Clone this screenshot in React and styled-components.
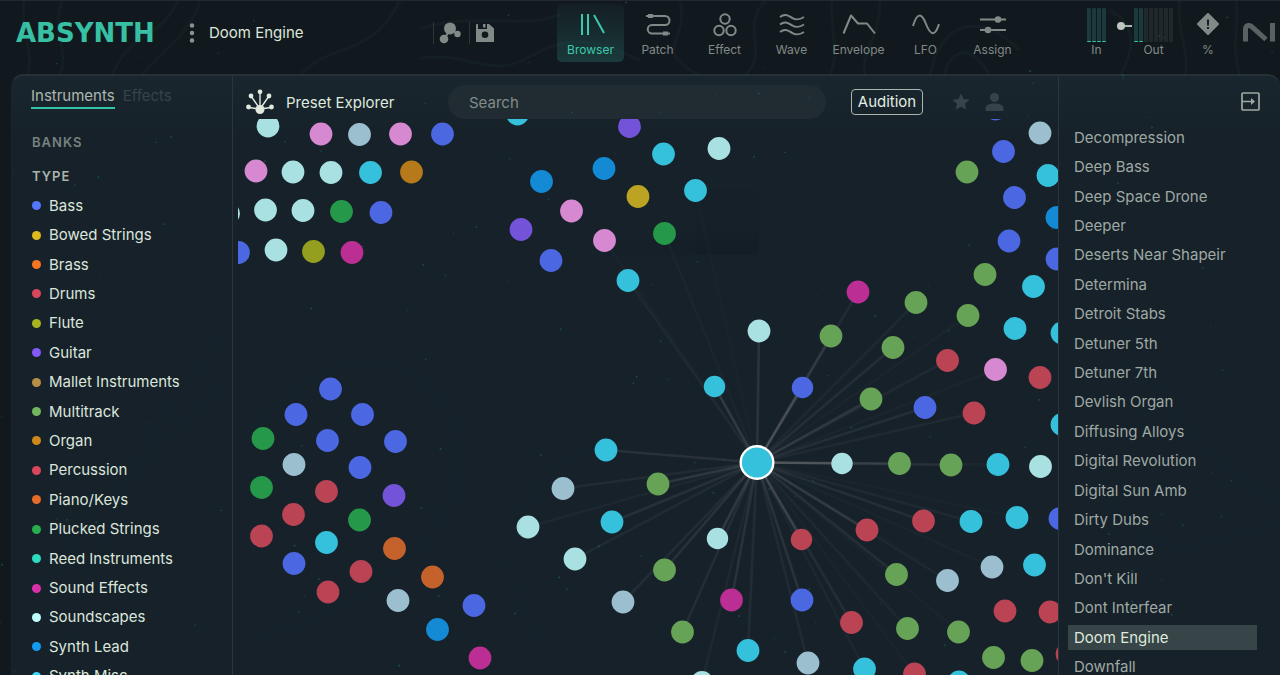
import React, { useState } from "react";
import styled, { createGlobalStyle } from "styled-components";

const GlobalStyle = createGlobalStyle`
  * {
    box-sizing: border-box;
  }
  body {
    margin: 0;
    background: #12191e;
    font-family: Inter, "Liberation Sans", sans-serif;
    font-size: 15px;
    color: #dce6dc;
  }
  button, input {
    font: inherit;
    color: inherit;
    border: 0;
    padding: 0;
    margin: 0;
    background: none;
  }
  ul, h1, h2, p {
    list-style: none;
    margin: 0;
    padding: 0;
    font-size: inherit;
    font-weight: inherit;
  }
  svg {
    display: block;
  }
`;

const Shell = styled.div`
  position: relative;
  display: flex;
  flex-direction: column;
  height: 100vh;
  overflow: hidden;
  border-top: 1px solid #20292e;
`;

const Texture = styled.svg`
  position: absolute;
  inset: 0;
  width: 100%;
  height: 100%;
  pointer-events: none;
`;

const TopBar = styled.header`
  display: grid;
  grid-template-columns: minmax(0, 1fr) auto 254px;
  height: 73px;
  flex: none;
`;

const BarLeft = styled.div`
  display: flex;
  align-items: center;
  height: 64px;
  padding-left: 16px;
  padding-right: 62px;
`;

const Logo = styled.h1`
  width: 172px;
  font-family: "DejaVu Sans", sans-serif;
  font-weight: 700;
  font-size: 26px;
  line-height: 24px;
  color: #37c0a4;
`;

const MenuBtn = styled.button`
  width: 8px;
  margin-right: 13px;
  color: #8b9490;
`;

const PresetName = styled.p`
  line-height: 20px;
  white-space: nowrap;
`;

const Tools = styled.div`
  display: flex;
  align-items: center;
  margin-left: auto;
  color: #818a87;
`;

const ToolBtn = styled.button`
  height: 22px;
  padding-left: 5px;
  padding-right: ${(p) => p.$right || 0}px;
  border-left: 1px solid #2c3539;
  display: flex;
  align-items: center;
`;

const Nav = styled.nav`
  display: flex;
  padding-top: 3px;
`;

const NavBtn = styled.button`
  display: flex;
  flex-direction: column;
  align-items: center;
  width: 67px;
  height: 58px;
  padding-top: 9px;
  border-radius: 5px;
  font-size: 12px;
  line-height: 16px;
  gap: 6px;
  color: ${(p) => (p.$on ? "#3cc9ad" : "#818a87")};
  background: ${(p) => (p.$on ? "linear-gradient(#141e23, #1b3a3b)" : "none")};
`;

const BarRight = styled.div`
  display: flex;
  align-items: flex-start;
  padding-top: 7px;
  padding-left: 61px;
  color: #818a87;
`;

const MeterCol = styled.div`
  display: flex;
  flex-direction: column;
  align-items: center;
  flex: none;
  font-size: 12px;
  line-height: 16px;
  margin-left: ${(p) => p.$left || 0}px;
`;

const Bars = styled.div`
  display: flex;
  gap: 1px;
  height: 34px;
`;

const MeterBar = styled.span`
  width: 4px;
  border-radius: 1px;
  background: ${(p) => (p.$live ? "#1a3a3b" : "#20282c")};
  border-bottom: 1px solid ${(p) => (p.$live ? "#2fc9a6" : "#20282c")};
`;

const GainSlider = styled.input`
  appearance: none;
  flex: none;
  width: 15px;
  height: 8px;
  margin: 14px 2px 0 11px;
  background: linear-gradient(#aeb9b1, #aeb9b1) center / 100% 2px no-repeat;
  &::-webkit-slider-thumb {
    appearance: none;
    width: 8px;
    height: 8px;
    border-radius: 50%;
    background: #bcc7be;
  }
`;

const BrandMark = styled.svg`
  flex: none;
  margin: 15px 0 0 23px;
`;

const Panel = styled.main`
  flex: 1;
  min-height: 0;
  display: flex;
  margin-left: 11px;
  background: linear-gradient(#1a262e, #16212a 60px);
  border: 1px solid #263137;
  border-top-width: 2px;
  border-bottom: 0;
  border-right: 0;
  border-left-color: #1a242b;
  border-radius: 12px 12px 0 0;
  overflow: hidden;
`;

const Sidebar = styled.aside`
  flex: 0 0 221px;
  border-right: 1px solid #2b363c;
  padding: 10px 0 0 19px;
`;

const Tabs = styled.div`
  display: flex;
  gap: 8px;
  margin-bottom: 23px;
`;

const Tab = styled.button`
  height: 23px;
  line-height: 20px;
  padding-bottom: 1px;
  border-bottom: 2px solid ${(p) => (p.$on ? "#2fc4a8" : "transparent")};
  color: ${(p) => (p.$on ? "#adb8b0" : "#37434a")};
`;

const Heading = styled.h2`
  font-size: 13px;
  font-weight: 600;
  line-height: 20px;
  letter-spacing: 1px;
  margin-left: 1px;
  margin-bottom: ${(p) => (p.$open ? 5 : 14)}px;
  color: ${(p) => (p.$open ? "#a9b4ac" : "#78827f")};
`;

const TypeList = styled.ul`
  display: grid;
  grid-auto-rows: 1fr;
  align-items: center;
  height: 500px;
  margin-left: 1px;
`;

const TypeBtn = styled.button`
  display: flex;
  align-items: center;
  gap: 8px;
  line-height: 20px;
`;

const Dot = styled.span`
  width: 9px;
  height: 9px;
  border-radius: 50%;
  background: ${(p) => p.$color};
`;

const Explorer = styled.section`
  flex: 1;
  min-width: 0;
  display: flex;
  flex-direction: column;
`;

const ExplorerHead = styled.div`
  display: flex;
  align-items: center;
  flex: none;
  height: 43px;
  padding: 9px 54px 0 13px;
  color: #37434a;
`;

const Title = styled.div`
  display: flex;
  align-items: center;
  gap: 12px;
  flex: 0 0 202px;
  color: #dfe9de;
`;

const Search = styled.input`
  flex: 1;
  min-width: 0;
  height: 34px;
  padding: 0 21px;
  border-radius: 17px;
  background: #202b32;
  outline: none;
  &::placeholder {
    color: #818c8a;
    opacity: 1;
  }
`;

const Audition = styled.button`
  width: 72px;
  height: 26px;
  margin: 0 29px 0 25px;
  border: 1px solid #aab5ad;
  border-radius: 4px;
  line-height: 20px;
  color: #e3ede2;
`;

const IconBtn = styled.button`
  margin-right: ${(p) => p.$right || 0}px;
`;

const MapArea = styled.div`
  flex: 1;
  min-height: 0;
  margin-left: 5px;
  svg {
    width: 100%;
    height: 100%;
  }
`;

const Results = styled.aside`
  flex: 0 0 222px;
  border-left: 1px solid #2b363c;
  padding: 16px 0 0 9px;
  color: #9fa9a3;
`;

const CloseBtn = styled.button`
  display: block;
  margin: 0 20px 12px auto;
`;

const ResultList = styled.ul`
  display: grid;
  grid-auto-rows: 1fr;
  align-items: center;
  height: 559px;
  padding-right: 23px;
`;

const ResultBtn = styled.button`
  display: block;
  width: 100%;
  height: 25px;
  padding-left: 6px;
  text-align: left;
  line-height: 20px;
  color: ${(p) => (p.$on ? "#dfe9dc" : "inherit")};
  background: ${(p) => (p.$on ? "#374448" : "none")};
`;

const types = [
  ["Bass", "#5576ff"],
  ["Bowed Strings", "#dcb91f"],
  ["Brass", "#f9741f"],
  ["Drums", "#db475a"],
  ["Flute", "#a9b31e"],
  ["Guitar", "#8459f7"],
  ["Mallet Instruments", "#b98f45"],
  ["Multitrack", "#72b75c"],
  ["Organ", "#cf881a"],
  ["Percussion", "#db475a"],
  ["Piano/Keys", "#e66a28"],
  ["Plucked Strings", "#26ad4f"],
  ["Reed Instruments", "#2ddbc0"],
  ["Sound Effects", "#dc2fa9"],
  ["Soundscapes", "#bffcfc"],
  ["Synth Lead", "#129bf3"],
  ["Synth Misc", "#35d9f8"],
];

const presets = [
  "Decompression", "Deep Bass", "Deep Space Drone", "Deeper",
  "Deserts Near Shapeir", "Determina", "Detroit Stabs", "Detuner 5th",
  "Detuner 7th", "Devlish Organ", "Diffusing Alloys", "Digital Revolution",
  "Digital Sun Amb", "Dirty Dubs", "Dominance", "Don't Kill",
  "Dont Interfear", "Doom Engine", "Downfall",
];

const colors = {
  cyan: "#35c0db",
  mist: "#a9e0e1",
  steel: "#9bbfcf",
  multi: "#66a356",
  pluck: "#259849",
  bass: "#4b67e1",
  red: "#ba4354",
  pink: "#d689d1",
  violet: "#7353d8",
  lead: "#1489d4",
  bowed: "#bda323",
  organ: "#b67a1a",
  flute: "#959f1f",
  fx: "#bb2e93",
  keys: "#c5612a",
};

// x, y of every preset, grouped by type
const groups = {
  cyan: [
    [370.5, 172.5], [517.5, 114], [663.5, 154], [695.5, 190.5], [628, 280.5],
    [714.5, 386.5], [606, 450], [612, 522], [326.5, 542.5], [748, 650.5],
    [864.5, 669], [959, 682], [998, 464.5], [971, 521.5], [1017, 517.5],
    [1034.5, 565], [1015, 328.5], [1033.5, 286.5], [1048, 175.5],
    [1062, 333], [1062, 424.5],
  ],
  mist: [
    [268, 126], [293, 172], [331, 172.5], [265.5, 210], [303, 210.5],
    [228.5, 213.5], [276, 250], [719, 148.5], [759, 331], [842, 463.5],
    [717.5, 538.5], [528, 527], [575, 559], [702, 682.5], [1040.5, 466.5],
  ],
  steel: [
    [359.5, 134.5], [294, 464.5], [398, 600.5], [563, 488.5], [623, 602],
    [808, 663], [947.5, 580.5], [992, 567], [1040, 133],
  ],
  multi: [
    [831, 336], [893, 347.5], [916, 302.5], [871, 399], [968, 315.5],
    [985, 274.5], [967, 172], [899.5, 463.5], [951, 465], [658, 484],
    [664.5, 570], [682.5, 632], [896.5, 574.5], [907.5, 628.5],
    [958.5, 632], [993.5, 657.5], [1032, 660.5],
  ],
  pluck: [[341.5, 211.5], [263, 438.5], [261.5, 487.5], [359.5, 520], [664.5, 233.5]],
  bass: [
    [442.5, 134], [381, 212.5], [238.5, 252.5], [551, 260.5], [330.5, 389],
    [296, 414.5], [362.5, 414.5], [327.5, 440.5], [395.5, 441.5],
    [360, 467.5], [294, 563.5], [474, 605.5], [802.5, 387.5], [925, 407.5],
    [802, 600], [1003.5, 151.5], [1014.5, 197.5], [1009, 241], [1057, 259],
    [1060, 518.5], [995.5, 109],
  ],
  red: [
    [326.5, 491.5], [293.5, 514.5], [261.5, 536], [361, 571.5], [328, 592],
    [801.5, 539.5], [867, 530], [923.5, 521], [851.5, 622.5], [914.5, 674],
    [947.5, 360.5], [974, 413], [1040, 377.5], [1005, 611], [1050, 612],
    [1067, 654],
  ],
  pink: [[321, 134], [400.5, 134], [256, 171], [571.5, 211], [604.5, 240.5], [995.5, 369.5]],
  violet: [[629.5, 126.5], [521, 229.5], [394, 495.5]],
  lead: [[541.5, 181.5], [604, 168.5], [437.5, 629.5], [1057, 217.5]],
  bowed: [[638, 196.5]],
  organ: [[411.5, 172]],
  flute: [[313.5, 251.5]],
  fx: [[352, 252.5], [858, 292], [731.5, 600], [480, 658]],
  keys: [[394.5, 548.5], [432.5, 577]],
};

const nodes = Object.entries(groups).flatMap(([type, pts]) =>
  pts.map(([x, y]) => ({ x, y, type }))
);

const center = { x: 757, y: 462.5 };
const reach = 290;

function PresetMap() {
  const near = nodes
    .map((n) => ({ ...n, d: Math.hypot(n.x - center.x, n.y - center.y) }))
    .filter((n) => n.d < reach);

  return (
    <svg viewBox="238 119 820 556" preserveAspectRatio="xMidYMid slice">
      {near.map((n, i) => (
        <line
          key={i}
          x1={center.x}
          y1={center.y}
          x2={n.x}
          y2={n.y}
          stroke="#fff4ea"
          strokeWidth="2.6"
          opacity={0.17 * Math.pow(1 - n.d / (reach + 10), 1.2)}
        />
      ))}
      {nodes.map((n, i) => (
        <circle
          key={i}
          cx={n.x}
          cy={n.y}
          r={Math.hypot(n.x - center.x, n.y - center.y) < 100 ? 10.7 : 11.4}
          fill={colors[n.type]}
        />
      ))}
      <circle cx={center.x} cy={center.y} r="16.3" fill="#35c0db" stroke="#fff" strokeWidth="2.4" />
    </svg>
  );
}

// faint contour lines and dust over the whole window
const dust = [];
let seed = 7;
const rnd = () => (seed = (seed * 16807) % 2147483647) / 2147483647;
for (let i = 0; i < 150; i++) {
  dust.push([rnd() * 1280, rnd() * 675, 0.5 + rnd() * 0.6]);
}

function Backdrop() {
  return (
    <Texture viewBox="0 0 1280 675" preserveAspectRatio="xMidYMid slice" aria-hidden="true">
      <g fill="none" stroke="#2c6c6b" strokeWidth="3">
        <g opacity="0.07">
          <path d="M24 0C20 30 34 52 28 75M62 0C50 30 70 50 60 75M112 75C130 30 160 40 178 0M142 75C160 50 190 36 200 0M300 75C330 40 370 60 400 0" />
          <path d="M420 58C470 50 490 80 530 56S600 40 640 60M420 28C480 10 520 30 560 14M680 0C690 40 650 50 700 75M765 0C740 30 770 50 745 75M832 0C830 30 840 50 830 75M880 0C880 40 860 50 865 75" />
          <path d="M930 75C940 20 980 10 1020 50M944 75C950 50 970 40 990 75M1120 75C1140 40 1130 20 1110 10M1180 0C1176 30 1190 50 1185 75M1240 75C1230 40 1240 30 1236 0" />
        </g>
        <g opacity="0.03">
          <path d="M30 600C80 520 180 420 230 380M60 675C90 560 140 420 230 330M250 640C420 590 500 480 440 400S300 380 240 440M540 640C480 560 520 480 600 440" />
          <path d="M1080 200C1100 320 1180 460 1280 500M1100 460C1120 560 1180 560 1280 520" />
        </g>
      </g>
      <g fill="#1f8f80" opacity="0.35">
        {dust.map((d, i) => (
          <circle key={i} cx={d[0]} cy={d[1]} r={d[2]} />
        ))}
      </g>
    </Texture>
  );
}

const navItems = [
  {
    name: "Browser",
    icon: <path d="M5 1v21M11 1v21M17 2l10 18" />,
  },
  {
    name: "Patch",
    icon: (
      <>
        <path d="M6 3h15a4.500 4.500 0 0 1 0 9H8a4.200 4.200 0 0 0 0 8.500h12" />
        <path d="M4 3h5M19 20.500h5" strokeWidth="4" />
        <path d="M2 3h3M23 20.500h3" strokeWidth="2" />
      </>
    ),
  },
  {
    name: "Effect",
    icon: (
      <>
        <circle cx="14" cy="6" r="4.700" />
        <circle cx="8" cy="17.500" r="4.700" />
        <circle cx="20" cy="17.500" r="4.700" />
      </>
    ),
  },
  {
    name: "Wave",
    icon: (
      <path d="M2 4c5-4 8-1.500 12 .8s7 2.500 12-.8M2 11.500c5-4 8-1.500 12 .8s7 2.500 12-.8M2 19c5-4 8-1.500 12 .8s7 2.500 12-.8" />
    ),
  },
  {
    name: "Envelope",
    icon: <path d="M-1.500 20.500L6 2.500l7 8h9l8 10" strokeLinejoin="round" />,
  },
  {
    name: "LFO",
    icon: <path d="M1 13C5-.5 9.500-.5 14 11s9 13 13 0" />,
  },
  {
    name: "Assign",
    icon: (
      <>
        <path d="M1 6.500h26M1 17h26" />
        <circle cx="19" cy="6.500" r="2.300" fill="currentColor" />
        <circle cx="9" cy="17" r="2.300" fill="currentColor" />
      </>
    ),
  },
];

function Header({ view, setView, preset }) {
  return (
    <TopBar>
      <BarLeft>
        <Logo>ABSYNTH</Logo>
        <MenuBtn aria-label="Menu">
          <svg width="8" height="20" fill="currentColor">
            <circle cx="4" cy="2.500" r="2.200" />
            <circle cx="4" cy="10" r="2.200" />
            <circle cx="4" cy="17.500" r="2.200" />
          </svg>
        </MenuBtn>
        <PresetName>{preset}</PresetName>
        <Tools>
          <ToolBtn $right={8} aria-label="Mutate">
            <svg width="22" height="22" fill="currentColor" stroke="currentColor">
              <path d="M11 7L5 18M11 7l8 5" strokeWidth="2" />
              <circle cx="11" cy="6.500" r="6" stroke="none" />
              <circle cx="5" cy="17" r="4.300" stroke="none" />
              <circle cx="18.500" cy="12" r="3.200" stroke="none" />
            </svg>
          </ToolBtn>
          <ToolBtn aria-label="Save">
            <svg width="20" height="18" fill="currentColor">
              <path fillRule="evenodd" d="M2 0h1v5h9V0h2l5 4.500V18H1V1a1 1 0 0 1 1-1zM10 7.500a3.300 3.300 0 1 0 0 6.600a3.300 3.300 0 1 0 0-6.600z" />
              <path d="M8 0h2.500v3.500H8z" />
            </svg>
          </ToolBtn>
        </Tools>
      </BarLeft>
      <Nav>
        {navItems.map((item) => (
          <NavBtn key={item.name} $on={view === item.name} onClick={() => setView(item.name)}>
            <svg width="28" height="23" fill="none" stroke="currentColor" strokeWidth="2" overflow="visible">
              {item.icon}
            </svg>
            {item.name}
          </NavBtn>
        ))}
      </Nav>
      <BarRight>
        <MeterCol>
          <Bars>
            {[0, 1, 2, 3].map((i) => (
              <MeterBar key={i} $live />
            ))}
          </Bars>
          In
        </MeterCol>
        <GainSlider type="range" defaultValue="0" aria-label="Output gain" />
        <MeterCol>
          <Bars>
            {[0, 1, 2, 3, 4, 5, 6, 7].map((i) => (
              <MeterBar key={i} $live={i < 2} />
            ))}
          </Bars>
          Out
        </MeterCol>
        <MeterCol $left={23}>
          <svg width="24" height="34">
            <path d="M12 6l10 10-10 10L2 16z" fill="currentColor" stroke="currentColor" strokeWidth="2" strokeLinejoin="round" />
            <path d="M12 11.500v6M12 19v2" stroke="#161e23" strokeWidth="2" />
          </svg>
          %
        </MeterCol>
        <BrandMark width="33" height="19" fill="none" stroke="#596263" strokeWidth="5">
          <path d="M2.500 18.500V6.500C2.500 2 6 1.500 9 4L23 16.500" />
          <path d="M29.500 0v18.500" />
        </BrandMark>
      </BarRight>
    </TopBar>
  );
}

export default function App() {
  const [view, setView] = useState("Browser");
  const [tab, setTab] = useState("Instruments");
  const [preset, setPreset] = useState("Doom Engine");

  return (
    <Shell>
      <GlobalStyle />
      <Header view={view} setView={setView} preset={preset} />
      <Panel>
        <Sidebar>
          <Tabs>
            {["Instruments", "Effects"].map((t) => (
              <Tab key={t} $on={tab === t} onClick={() => setTab(t)}>
                {t}
              </Tab>
            ))}
          </Tabs>
          <Heading>BANKS</Heading>
          <Heading $open>TYPE</Heading>
          <TypeList>
            {types.map(([name, color]) => (
              <li key={name}>
                <TypeBtn>
                  <Dot $color={color} />
                  {name}
                </TypeBtn>
              </li>
            ))}
          </TypeList>
        </Sidebar>

        <Explorer>
          <ExplorerHead>
            <Title>
              <svg width="28" height="26" fill="currentColor" stroke="currentColor" strokeWidth="1.400">
                <path d="M14 20L3 18.500M14 20L5 7M14 20V3M14 20l9-13M14 20l11-1.500" />
                <g stroke="none">
                  <circle cx="14" cy="20.500" r="4.500" />
                  <circle cx="2.500" cy="18" r="2.400" />
                  <circle cx="5" cy="7" r="2.400" />
                  <circle cx="14" cy="2.800" r="2.400" />
                  <circle cx="23" cy="7" r="2.400" />
                  <circle cx="25.500" cy="18" r="2.400" />
                </g>
              </svg>
              Preset Explorer
            </Title>
            <Search type="text" placeholder="Search" aria-label="Search" />
            <Audition>Audition</Audition>
            <IconBtn $right={15} aria-label="Favorites">
              <svg width="18" height="18" fill="currentColor">
                <path d="M9 .5l2.500 5.600 6.200.6-4.700 4.100 1.400 6L9 13.700l-5.400 3.100 1.400-6L.3 6.700l6.200-.6z" />
              </svg>
            </IconBtn>
            <IconBtn aria-label="User presets">
              <svg width="19" height="18" fill="currentColor">
                <circle cx="9.500" cy="4.500" r="4.500" />
                <path d="M.5 18v-2.500c0-3 3-5 9-5s9 2 9 5V18z" />
              </svg>
            </IconBtn>
          </ExplorerHead>
          <MapArea>
            <PresetMap />
          </MapArea>
        </Explorer>

        <Results>
          <CloseBtn aria-label="Collapse list">
            <svg width="19" height="19" fill="none" stroke="currentColor" strokeWidth="1.700">
              <rect x="1" y="1" width="17" height="17" rx="1" />
              <path d="M1 9.500h11" />
              <path d="M10 6l4 3.500-4 3.500z" fill="currentColor" stroke="none" />
            </svg>
          </CloseBtn>
          <ResultList>
            {presets.map((name) => (
              <li key={name}>
                <ResultBtn $on={preset === name} onClick={() => setPreset(name)}>
                  {name}
                </ResultBtn>
              </li>
            ))}
          </ResultList>
        </Results>
      </Panel>
      <Backdrop />
    </Shell>
  );
}
